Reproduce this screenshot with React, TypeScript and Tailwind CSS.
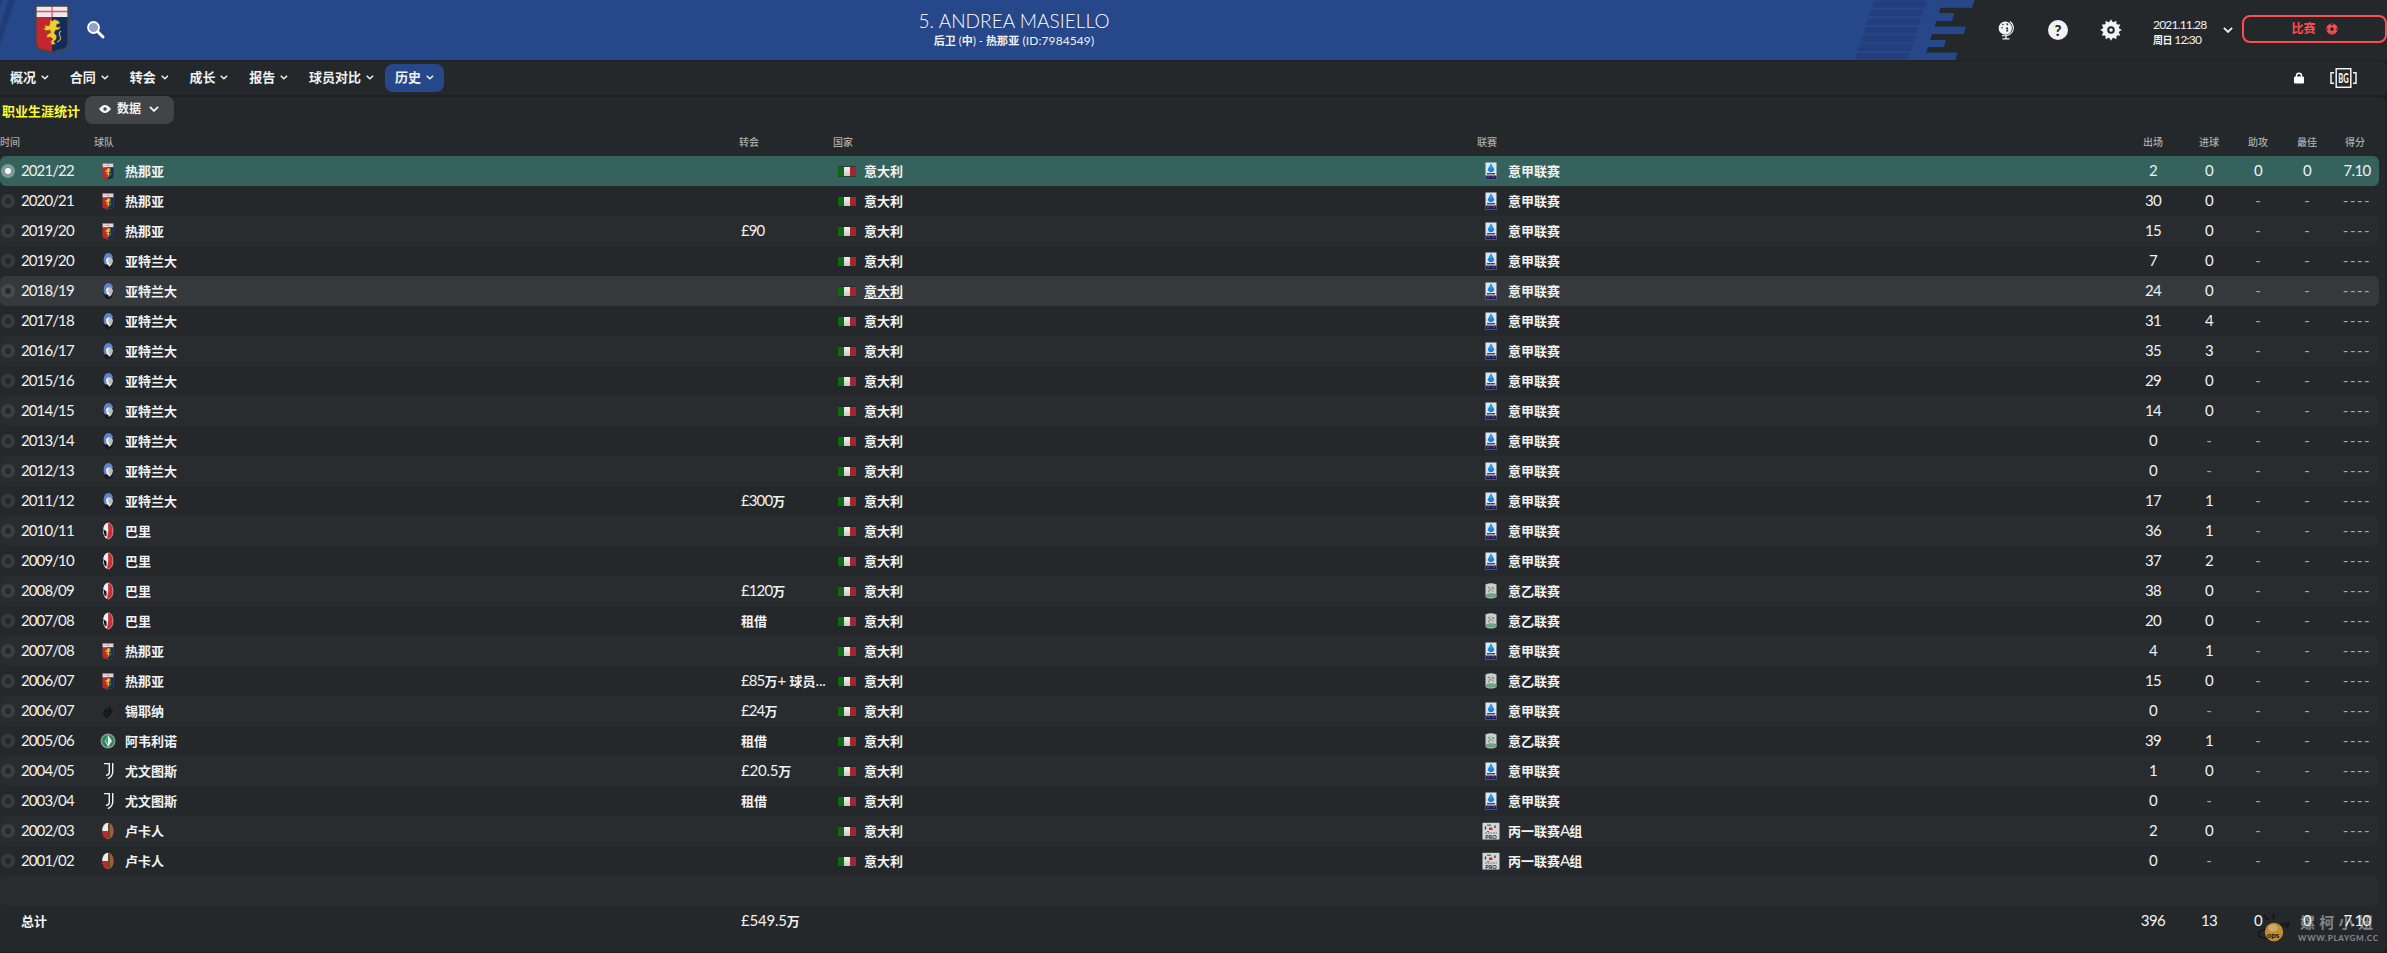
import React from "react";

type Club = "genoa" | "atalanta" | "bari" | "siena" | "avellino" | "juve" | "lucchese";
type League = "a" | "b" | "c";

interface Season {
  year: string;
  club: Club;
  fee?: string;
  league: League;
  apps: string;
  goals: string;
}

const CLUB_NAMES: Record<Club, string> = {
  genoa: "热那亚",
  atalanta: "亚特兰大",
  bari: "巴里",
  siena: "锡耶纳",
  avellino: "阿韦利诺",
  juve: "尤文图斯",
  lucchese: "卢卡人",
};

const LEAGUE_NAMES: Record<League, string> = {
  a: "意甲联赛",
  b: "意乙联赛",
  c: "丙一联赛A组",
};

const SEASONS: Season[] = [
  { year: "2021/22", club: "genoa", league: "a", apps: "2", goals: "0" },
  { year: "2020/21", club: "genoa", league: "a", apps: "30", goals: "0" },
  { year: "2019/20", club: "genoa", fee: "£90", league: "a", apps: "15", goals: "0" },
  { year: "2019/20", club: "atalanta", league: "a", apps: "7", goals: "0" },
  { year: "2018/19", club: "atalanta", league: "a", apps: "24", goals: "0" },
  { year: "2017/18", club: "atalanta", league: "a", apps: "31", goals: "4" },
  { year: "2016/17", club: "atalanta", league: "a", apps: "35", goals: "3" },
  { year: "2015/16", club: "atalanta", league: "a", apps: "29", goals: "0" },
  { year: "2014/15", club: "atalanta", league: "a", apps: "14", goals: "0" },
  { year: "2013/14", club: "atalanta", league: "a", apps: "0", goals: "-" },
  { year: "2012/13", club: "atalanta", league: "a", apps: "0", goals: "-" },
  { year: "2011/12", club: "atalanta", fee: "£300万", league: "a", apps: "17", goals: "1" },
  { year: "2010/11", club: "bari", league: "a", apps: "36", goals: "1" },
  { year: "2009/10", club: "bari", league: "a", apps: "37", goals: "2" },
  { year: "2008/09", club: "bari", fee: "£120万", league: "b", apps: "38", goals: "0" },
  { year: "2007/08", club: "bari", fee: "租借", league: "b", apps: "20", goals: "0" },
  { year: "2007/08", club: "genoa", league: "a", apps: "4", goals: "1" },
  { year: "2006/07", club: "genoa", fee: "£85万+ 球员...", league: "b", apps: "15", goals: "0" },
  { year: "2006/07", club: "siena", fee: "£24万", league: "a", apps: "0", goals: "-" },
  { year: "2005/06", club: "avellino", fee: "租借", league: "b", apps: "39", goals: "1" },
  { year: "2004/05", club: "juve", fee: "£20.5万", league: "a", apps: "1", goals: "0" },
  { year: "2003/04", club: "juve", fee: "租借", league: "a", apps: "0", goals: "-" },
  { year: "2002/03", club: "lucchese", league: "c", apps: "2", goals: "0" },
  { year: "2001/02", club: "lucchese", league: "c", apps: "0", goals: "-" },
];

const TABS = ["概况", "合同", "转会", "成长", "报告", "球员对比", "历史"];

const COLS = "grid grid-cols-[93px_646px_93px_644px_649px_56px_56px_42px_56px_44px]";

// Latin runs are set larger and lighter than the Chinese ones
const Mixed = ({ text }: { text: string }) => (
  <>
    {text.split(/([\u4e00-\u9fff]+)/).filter(Boolean).map((part, i) =>
      /[\u4e00-\u9fff]/.test(part) ? (
        <span key={i} className="text-[13px] font-bold">{part}</span>
      ) : (
        <span
          key={i}
          className={`text-[15px] font-normal whitespace-pre ${/[.+]/.test(part) ? "tracking-[-0.2px]" : "tracking-[-0.9px]"}`}
        >
          {part}
        </span>
      )
    )}
  </>
);

const Chevron = ({ className }: { className?: string }) => (
  <svg viewBox="0 0 8 5" className={className} fill="none" stroke="currentColor" strokeWidth="1.5">
    <path d="M0.7 0.7 L4 3.9 L7.3 0.7" />
  </svg>
);

const GenoaCrest = ({ className }: { className?: string }) => (
  <svg viewBox="0 0 34 49" className={className}>
    <path d="M1 1 H33 V38 Q33 44 26 45 Q19 46 17 48.300 Q15 46 8 45 Q1 44 1 38Z" fill="#c32631" />
    <path d="M17 1 H33 V38 Q33 44 26 45 Q19 46 17 48.300Z" fill="#122a5c" />
    <path d="M1 1 H33 V12 H1Z" fill="#eceaf0" />
    <path d="M17 1 V12 M1 6.500 H33" stroke="#e0565c" strokeWidth="1.300" />
    <path
      d="M15 15 l2.500 1 2-1.500 4 1.500 1.500 2.500 -3 .5 -1 2.500 2 1 2.500-1 -1.500 3 -3.500 .5 -1.500 3 2.500 3 -.5 3.500 -2.500 2 2 2.500 -4 .5 -.5-3 2-2.500 -2.500-2 -4 .5 1-3 3.500-2 -1-2.500 -4 .5 -3-2 2.500-.5 -1-2.500 4.500 .5 1-2.500z"
      fill="#f0cf2d"
      stroke="#8a6a14"
      strokeWidth="0.500"
    />
    <path d="M22 37 q5-2 3-6 q-2-3 1-5" fill="none" stroke="#d9b92c" strokeWidth="1.100" />
    <path d="M1 1 H33 V38 Q33 44 26 45 Q19 46 17 48.300 Q15 46 8 45 Q1 44 1 38Z" fill="none" stroke="#4f4630" strokeWidth="1.300" />
  </svg>
);

const ClubBadge = ({ club }: { club: Club }) => {
  if (club === "genoa") return <GenoaCrest className="h-[17px] w-3" />;
  return (
    <svg viewBox="0 0 16 18" className="h-[18px] w-4">
      {club === "atalanta" && (
        <>
          <ellipse cx="8.300" cy="9" rx="5" ry="8" fill="#15181b" />
          <path d="M3.500 8 Q4 1 8.300 1 Q12 1 13 6 L8 6 L6 13 Q3.500 12 3.500 8Z" fill="#5d83cc" />
          <path d="M7 6 Q12 4 13 8 Q13 13 9 15 L7.500 11Z" fill="#b9bdc2" />
          <path d="M6 7 L9 5 L8 9 L10 14 L6.500 12Z" fill="#f2f4f6" />
        </>
      )}
      {club === "bari" && (
        <>
          <ellipse cx="8" cy="9" rx="4.900" ry="8.300" fill="#c8313a" />
          <path d="M8 .7 Q3.100 1.500 3.100 9 Q3.500 15 7 17 Q9 9 8 .7Z" fill="#f0f0f0" />
          <path d="M3.300 7 L6.500 9.500 V14.500 L4.500 13.500Z" fill="#17191b" />
          <path d="M8 .7 Q12.900 1.500 12.900 9 Q12.900 16 8 17.300" fill="none" stroke="#e9a4a6" strokeWidth=".8" />
        </>
      )}
      {club === "siena" && (
        <>
          <path d="M5 7 L9 6 L10 2 L11 7 L13 9 Q13 15 8 16.500 Q3 15 3 10Z" fill="#17191a" />
          <path d="M8 16 Q12.500 14 12.800 10" fill="none" stroke="#4a4633" strokeWidth=".8" />
        </>
      )}
      {club === "avellino" && (
        <>
          <circle cx="8" cy="9" r="7.500" fill="#8c9693" />
          <circle cx="8" cy="9" r="5.900" fill="#23875a" />
          <path d="M8 3 L12 9 L8 15 L6.500 11.500 L4.500 9.500Z" fill="#e3f2ea" />
          <path d="M8 3 V12 L5 9Z" fill="#37a46f" />
        </>
      )}
      {club === "juve" && (
        <g fill="none" stroke="#f4f4f4" strokeWidth="1.400">
          <path d="M4 1.600 H9.300 V10.500 Q9.200 13 6 13.400" />
          <path d="M12.700 1 V10 Q12.500 14.500 7.800 16.600" />
        </g>
      )}
      {club === "lucchese" && (
        <>
          <ellipse cx="8" cy="9" rx="5.700" ry="8.200" fill="#8d6a3b" />
          <path d="M8 .8 Q2.300 1.500 2.300 9 H8Z" fill="#ececec" />
          <path d="M2.300 9 H8 V17.200 Q2.300 16 2.300 9Z" fill="#c9232b" />
          <path d="M9 2 V16" stroke="#3a2b24" strokeWidth="1" />
          <path d="M11 5 L13 9 L10 13" fill="none" stroke="#c8452f" strokeWidth="1" />
        </>
      )}
    </svg>
  );
};

const LeagueBadge = ({ league }: { league: League }) => (
  <svg viewBox="0 0 18 18" className="size-[18px]">
    {league === "a" && (
      <>
        <path d="M3.500 .5 H14.500 V17.500 H3.500Z" fill="#dde6ef" />
        <path d="M9 1.500 L11 5 L12.500 8 L10.500 10 H7.500 L5.500 8 L7 5Z" fill="#1e7fdb" />
        <path d="M9 2 L10 5 L9 7 L8 5Z" fill="#25b7ef" />
        <path d="M5 11.700 H13" stroke="#3a4861" strokeWidth="1.500" />
        <path d="M3.500 13.500 H14.500 V17.500 H3.500Z" fill="#14245f" />
        <path d="M5 15 H8 M10 15 H13" stroke="#a32e63" strokeWidth="1" />
      </>
    )}
    {league === "b" && (
      <>
        <path d="M3.500 2.500 Q9 0 14.500 2.500 V15 Q9 18 3.500 15Z" fill="#c9cfcb" />
        <path d="M6 6 L8 5 M10 5 L12 7 M7 8.500 L9 7" stroke="#3f9b70" strokeWidth="1.100" />
        <path d="M9.500 8 L11.500 9.500 M6 9.500 L7.500 10" stroke="#c55c58" strokeWidth="1" />
        <path d="M4 12.500 Q9 10.500 14 12 V15 Q9 16.500 4 15Z" fill="#6aa583" />
      </>
    )}
    {league === "c" && (
      <>
        <path d="M.5 .8 H17.500 V17.500 H.5Z" fill="#d6d6d6" />
        <path d="M5 2.500 H9 V4 H5Z" fill="#2f9b54" />
        <path d="M3.500 4.500 V7.500 M13 3.500 V6 M6 9 V10" stroke="#33373a" strokeWidth="1.300" />
        <path d="M7 5.500 H10.500 V8 H7Z" fill="#d52c34" />
        <path d="M3 11 H15" stroke="#777" strokeWidth="1.200" strokeDasharray="2 .7" />
        <text x="9" y="16.700" textAnchor="middle" fontSize="5.500" fontWeight="bold" fill="#222">PRO</text>
      </>
    )}
  </svg>
);

const ItalyFlag = () => (
  <span className="flex h-[11px] w-[18px] border-y border-[#1d2b20]/60">
    <span className="flex-1 bg-[#0c6b12]" />
    <span className="flex-1 bg-linear-to-b from-[#f2f2f2] to-[#c9c9c9]" />
    <span className="flex-1 bg-[#a8232b]" />
  </span>
);

const Radio = ({ selected }: { selected?: boolean }) => (
  <span
    className={`ml-px flex size-3.5 shrink-0 items-center justify-center rounded-full ${
      selected ? "bg-[#7d9995]" : "bg-white/9"
    }`}
  >
    <span className={`size-1.5 rounded-full ${selected ? "bg-white" : "bg-[#25282b]"}`} />
  </span>
);

const Stat = ({ value }: { value: string }) => (
  <span
    className={`pb-px text-center text-[15px] ${
      value === "-" ? "text-[#a5a7a8]" : value === "----" ? "text-[#a5a7a8] tracking-[1.5px]" : "tracking-[-0.6px]"
    }`}
  >
    {value}
  </span>
);

const SeasonRow = ({ season, index }: { season: Season; index: number }) => {
  const current = index === 0;
  const hovered = index === 4;
  const bg = current ? "bg-[#35625c]" : hovered ? "bg-[#36393c]" : index % 2 === 0 ? "bg-[#292c2f]" : "";

  return (
    <div className={`${COLS} h-[30px] w-[2379px] items-center rounded-md ${bg}`}>
      <div className="flex items-center gap-1.5">
        <Radio selected={current} />
        <span className="pb-0.5"><Mixed text={season.year} /></span>
      </div>
      <div className="flex items-center">
        <span className="ml-[7px] flex w-4 justify-center"><ClubBadge club={season.club} /></span>
        <span className="ml-[9px] pb-0.5"><Mixed text={CLUB_NAMES[season.club]} /></span>
      </div>
      <div className="pb-0.5 pl-0.5 whitespace-nowrap">{season.fee && <Mixed text={season.fee} />}</div>
      <div className="flex items-center pl-1.5">
        <ItalyFlag />
        <span className={`ml-2 pb-0.5 ${hovered ? "underline underline-offset-2" : ""}`}><Mixed text="意大利" /></span>
      </div>
      <div className="flex items-center pl-1.5">
        <LeagueBadge league={season.league} />
        <span className="ml-2 pb-0.5"><Mixed text={LEAGUE_NAMES[season.league]} /></span>
      </div>
      <Stat value={season.apps} />
      <Stat value={season.goals} />
      <Stat value={current ? "0" : "-"} />
      <Stat value={current ? "0" : "-"} />
      <Stat value={current ? "7.10" : "----"} />
    </div>
  );
};

const HeaderPattern = () => (
  <svg className="absolute inset-0 h-[60px] w-[2387px]" viewBox="0 0 2387 60">
    <path
      d="M0 0 H1974.500 L1972 7.700 H1940.500 L1939 13 H1954.500 L1952 21 H1936.300 L1934.600 26.500 H1966 L1963.800 34 H1932 L1930.200 40 H1946 L1943.800 47 H1928 L1926.300 52.500 H1957.500 L1955.500 60 H0Z"
      fill="#26478a"
    />
    <path d="M0 0 H2.500 L0 8Z M8.500 0 H15 L0 45 V27Z" fill="#223c76" />
    {[0, 1, 2, 3, 4, 5, 6].map((i) => {
      const y = 0.8 + i * 8.7;
      const shift = y * 0.32;
      return (
        <path
          key={i}
          d={`M${1874 - shift} ${y} h53 l-2.100 6.600 h-53z`}
          fill="#233e7a"
        />
      );
    })}
  </svg>
);

const GlobeIcon = () => (
  <svg viewBox="0 0 18 20" className="h-5 w-[18px]" fill="none" stroke="#f3f3f3">
    <circle cx="8.300" cy="8.200" r="6.600" fill="#f3f3f3" strokeWidth="0" />
    <path d="M13 1.500 Q18 6 15.500 11.500 Q12 16.800 5 15.600" strokeWidth="1.100" />
    <path d="M9 16 V18.500 M5.500 18.800 H12.500" strokeWidth="1.300" />
    <path d="M5.500 4 L6.500 5 M4.500 7.500 L5.500 8 M9.500 3.500 L11 5 M9 8.500 L11 8 M9.500 11.500 L11 9.500" stroke="#303437" strokeWidth="1.400" />
  </svg>
);

const GearIcon = () => (
  <svg viewBox="-11 -11 22 22" className="size-[22px]">
    {[0, 30, 60, 90, 120, 150, 180, 210, 240, 270, 300, 330].map((deg) => (
      <path key={deg} d="M-2.300 -7 L0 -10.800 L2.300 -7Z" fill="#f3f3f3" transform={`rotate(${deg})`} />
    ))}
    <circle r="8" fill="#f3f3f3" />
    <circle r="2.800" fill="none" stroke="#25282b" strokeWidth="2" />
  </svg>
);

const Header = () => (
  <header className="relative h-[60px] bg-[#25282b]">
    <HeaderPattern />
    <div className="relative grid h-full grid-cols-[918px_192px_1fr]">
      <div className="flex items-start pl-[35px]">
        <GenoaCrest className="mt-[5px] h-[49px] w-[34px]" />
        <svg viewBox="0 0 20 20" className="mt-5 ml-[17px] size-5">
          <circle cx="7.500" cy="7.500" r="5.500" fill="#91a2c6" stroke="#fff" strokeWidth="1.800" />
          <path d="M12 12 L17 17" stroke="#fff" strokeWidth="3" strokeLinecap="round" />
        </svg>
      </div>
      <div className="flex flex-col items-center whitespace-nowrap">
        <h1 className="mt-[9px] text-[19px] leading-6 font-light tracking-[0.05px] text-white">5. ANDREA MASIELLO</h1>
        <p className="text-[11px] leading-[15px] tracking-[0.1px]">
          <b>后卫 </b>(<b>中</b>) - <b>热那亚</b>
          <span className="text-[12px]"> (ID:7984549)</span>
        </p>
      </div>
      <div className="flex items-start">
        <div className="mt-5 ml-[887px]"><GlobeIcon /></div>
        <div className="mt-5 ml-[33px] flex size-5 items-center justify-center rounded-full bg-[#f3f3f3] text-[15px] font-black text-[#25282b]">?</div>
        <div className="mt-[19px] ml-8"><GearIcon /></div>
        <div className="mt-[17px] ml-[31px] w-[52px] text-[12px] leading-[15px] tracking-[-0.8px] whitespace-nowrap">
          <div>2021.11.28</div>
          <div><b className="text-[10px] tracking-[-0.5px]">周日</b> 12:30</div>
        </div>
        <Chevron className="mt-[27px] ml-[18px] w-2.5" />
        <button className="mt-[15px] ml-auto flex h-7 w-[145px] items-center justify-center gap-2.5 rounded-lg border-2 border-[#fc4d50] text-[12px] font-bold text-[#fc4d50]">
          比赛
          <svg viewBox="0 0 12 12" className="size-3">
            <circle cx="6" cy="6" r="5.600" fill="#fc4d50" />
            <path d="M6 4 L8 5.500 L7.300 7.800 H4.700 L4 5.500Z M4 1.500 L6 2.600 L8 1.500 L6 .9Z M.8 5 L2.300 6 L1.800 8Z M11.200 5 L9.700 6 L10.200 8Z M3 9.500 L4.600 9.800 L5 11Z M9 9.500 L7.400 9.800 L7 11Z" fill="#25282b" />
          </svg>
        </button>
      </div>
    </div>
  </header>
);

const TabBar = () => (
  <nav className="mt-px flex h-[34px] items-center justify-between rounded-r-md bg-[#25282b] pr-[30px]">
    <div className="flex gap-px">
      {TABS.map((tab) => (
        <button
          key={tab}
          className={`flex h-7 items-center gap-[5px] rounded-lg px-2.5 pb-px text-[13px] font-bold ${
            tab === "历史" ? "bg-[#26478a]" : ""
          }`}
        >
          {tab}
          <Chevron className="w-[7.800px]" />
        </button>
      ))}
    </div>
    <div className="flex items-center gap-[26px]">
      <svg viewBox="0 0 10 12" className="h-3 w-2.5">
        <path d="M2.500 6 V3.500 Q2.500 1.200 5 1.200 Q7.500 1.200 7.500 3.500 V6" fill="none" stroke="#fff" strokeWidth="1.400" />
        <rect y="4.500" width="10" height="7" rx="1.300" fill="#fff" />
      </svg>
      <svg viewBox="0 0 27 20" className="h-5 w-[27px]" fill="none" stroke="#f2f2f2">
        <rect x="6.200" y=".7" width="14.600" height="18.600" strokeWidth="1.500" />
        <path d="M4 4.700 H1 V15.300 H4 M23 4.700 H26 V15.300 H23" strokeWidth="1.500" />
        <text x="13.500" y="15" textAnchor="middle" textLength="10.500" lengthAdjust="spacingAndGlyphs" fontSize="14" fontWeight="900" fill="#f2f2f2" stroke="none">BG</text>
      </svg>
    </div>
  </nav>
);

const Watermark = () => (
  <div className="pointer-events-none absolute top-[911px] left-[2256px] flex items-start opacity-80">
    <svg viewBox="0 0 40 34" className="h-[34px] w-10">
      <ellipse cx="10" cy="23" rx="7.500" ry="4.500" fill="none" stroke="#111" strokeWidth="1.500" />
      <path d="M24 13 L29 15 M27 12 L34 14 M30 17 L33 11 M12 9 L8 4 M17 8 L18 3" stroke="#111" strokeWidth="1.700" />
      <circle cx="18" cy="21" r="9.200" fill="#e9a431" />
      <ellipse cx="17" cy="17" rx="5" ry="3.500" fill="#f5cd7c" />
      <text x="17" y="27" textAnchor="middle" fontSize="8" fontWeight="900" fill="#1d1710">ops</text>
    </svg>
    <div className="ml-0.5 text-[#9a9b9c]">
      <div className="pl-0.5 text-[15px] leading-[22px] font-bold tracking-[4.300px] whitespace-nowrap">嫘柯小妞</div>
      <div className="text-[8px] leading-[10px] font-black tracking-[0.700px] whitespace-nowrap">WWW.PLAYGM.CC</div>
    </div>
  </div>
);

export default function App() {
  return (
    <div className="relative h-[953px] w-[2387px] overflow-hidden bg-[#1d1f20] font-[Lato,'Noto_Sans_CJK_SC',sans-serif] text-[#f1f2f2]">
      <Header />
      <TabBar />
      <main className="mt-0.5 h-[855px] w-[2386px] rounded-r-md bg-[#25282b]">
        <div className="flex h-[27px] items-start">
          <h2 className="mt-1 w-[85px] pl-0.5 text-[13px] leading-5 font-bold text-[#fbfb35]">职业生涯统计</h2>
          <button className="-mt-px flex h-7 w-[89px] items-center rounded-lg bg-[#424547] pb-0.5 pl-3.5 text-[12px] font-bold">
            <svg viewBox="0 0 12 8" className="h-2 w-3">
              <path d="M0 4 Q6 -4 12 4 Q6 12 0 4Z" fill="#f3f3f3" />
              <circle cx="6" cy="4" r="1.700" fill="#424547" />
            </svg>
            <span className="ml-1.5">数据</span>
            <Chevron className="ml-2 w-2.5" />
          </button>
        </div>
        <div className={`${COLS} h-8 items-center pt-[5px] text-[10px] font-medium text-[#a9abac]`}>
          <span>时间</span>
          <span className="pl-px">球队</span>
          <span>转会</span>
          <span className="pl-px">国家</span>
          <span className="pl-px">联赛</span>
          {["出场", "进球", "助攻", "最佳"].map((label) => (
            <span key={label} className="text-center">{label}</span>
          ))}
          <span className="pl-2.5">得分</span>
        </div>
        {SEASONS.map((season, i) => (
          <SeasonRow key={i} season={season} index={i} />
        ))}
        <div className="h-[30px] w-[2379px] rounded-md bg-[#292c2f]" />
        <div className={`${COLS} relative z-10 h-[30px] w-[2379px] items-center`}>
          <span className="pb-0.5 pl-[21px]"><Mixed text="总计" /></span>
          <span />
          <span className="pb-0.5 pl-0.5"><Mixed text="£549.5万" /></span>
          <span />
          <span />
          <Stat value="396" />
          <Stat value="13" />
          <Stat value="0" />
          <Stat value="0" />
          <Stat value="7.10" />
        </div>
      </main>
      <Watermark />
    </div>
  );
}
